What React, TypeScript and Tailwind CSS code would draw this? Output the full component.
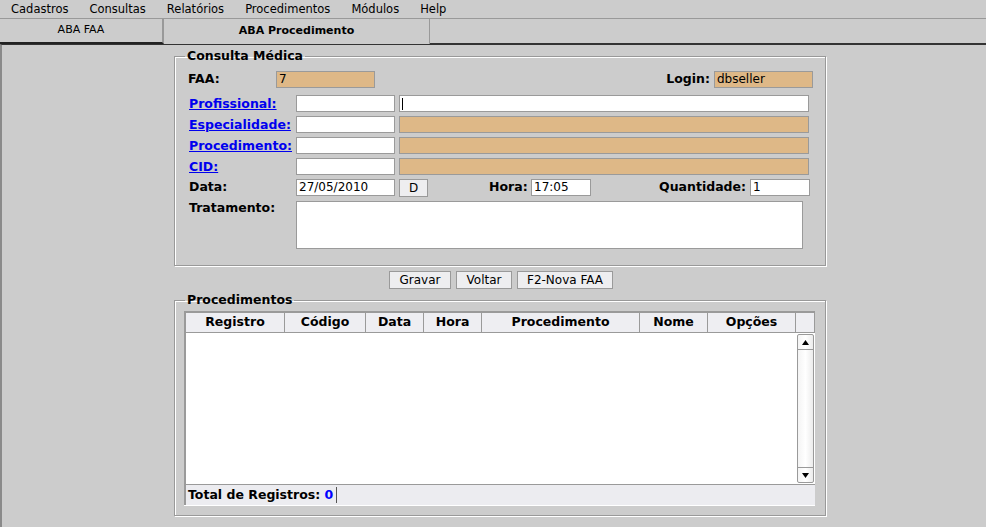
import React from 'react';

const menus = ['Cadastros', 'Consultas', 'Relatórios', 'Procedimentos', 'Módulos', 'Help'];
const columns = [
  { label: 'Registro', w: 'w-[99px]' },
  { label: 'Código', w: 'w-[81px]' },
  { label: 'Data', w: 'w-[58px]' },
  { label: 'Hora', w: 'w-[58px]' },
  { label: 'Procedimento', w: 'w-[158px]' },
  { label: 'Nome', w: 'w-[68px]' },
  { label: 'Opções', w: 'w-[88px]' },
];

const input = 'h-[17px] border border-[#9a9a9a] px-[2px] text-[12px] leading-[15px] text-black';
const white = `${input} bg-white`;
const tan = `${input} bg-[#deb887]`;
const btn = 'h-[18px] border border-[#9a9a9a] bg-[#eeeef0] text-[12px] leading-[16px] text-black';
const label = 'text-[12.5px] font-bold';

const LinkLabel = ({ text }: { text: string }) => (
  <span className="w-[108px] shrink-0 text-[12.5px] font-bold text-[#0000ee] underline leading-[17px] pl-[1px]">{text}</span>
);

const LookupRow = ({ text }: { text: string }) => (
  <div className="flex items-center h-[17px]">
    <LinkLabel text={text} />
    <div className={`${white} w-[99px]`} />
    <div className={`${tan} ml-[4px] w-[410px]`} />
  </div>
);

export default function App() {
  return (
    <div className="w-[986px] h-[527px] overflow-hidden bg-[#cccccc] font-['DejaVu_Sans',sans-serif] text-black flex flex-col">
      {/* Menu */}
      <div className="h-[19px] shrink-0 flex items-center gap-[21px] pl-[11px] border-b border-[#999] text-[11.5px]">
        {menus.map((m) => (
          <span key={m} className="leading-[18px]">{m}</span>
        ))}
      </div>

      {/* Tabs */}
      <div className="h-[25px] shrink-0 flex text-[11px]">
        <div className="w-[164px] flex items-center justify-center border-b-2 border-b-[#222] border-r-2 border-r-[#999]">
          ABA FAA
        </div>
        <div className="w-[266px] flex items-center justify-center font-bold border-r border-[#999]">
          ABA Procedimento
        </div>
        <div className="flex-1 border-b border-[#333]" />
      </div>

      {/* Content */}
      <div className="flex-1 border-t border-[#333] border-l-2 border-l-[#8a8a8a] flex flex-col">
        <fieldset className="mt-[4px] ml-[172px] w-[652px] border border-[#999] shadow-[inset_1px_1px_0_#fff,1px_1px_0_#fff] px-[13px] pb-[16px]">
          <legend className="ml-[-3px] px-[2px] text-[12.5px] font-bold leading-[14px]">Consulta Médica</legend>

          <div className="flex flex-col gap-[4px] pt-[8px]">
            <div className="flex items-center h-[17px]">
              <span className={`w-[88px] shrink-0 ${label}`}>FAA:</span>
              <div className={`${tan} w-[99px]`}>7</div>
              <span className={`flex-1 text-right pr-[4px] ${label}`}>Login:</span>
              <div className={`${tan} w-[99px] mr-[-1px]`}>dbseller</div>
            </div>

            <div className="flex items-center h-[17px] mt-[3px]">
              <LinkLabel text="Profissional:" />
              <div className={`${white} w-[99px]`} />
              <div className={`${white} ml-[4px] w-[410px] flex items-center`}>
                <span className="w-px h-[12px] bg-black" />
              </div>
            </div>
            <LookupRow text="Especialidade:" />
            <LookupRow text="Procedimento:" />
            <LookupRow text="CID:" />

            <div className="flex items-center h-[17px]">
              <span className={`w-[108px] shrink-0 pl-[1px] ${label}`}>Data:</span>
              <div className={`${white} w-[99px]`}>27/05/2010</div>
              <div className={`${btn} ml-[4px] w-[29px] h-[17px] text-center`}>D</div>
              <span className={`ml-[61px] w-[42px] ${label}`}>Hora:</span>
              <div className={`${white} w-[60px]`}>17:05</div>
              <span className={`flex-1 text-right pr-[4px] ${label}`}>Quantidade:</span>
              <div className={`${white} w-[60px] mr-[2px]`}>1</div>
            </div>

            <div className="flex items-start mt-[1px]">
              <span className={`w-[108px] shrink-0 pl-[1px] leading-[14px] ${label}`}>Tratamento:</span>
              <div className="w-[507px] h-[48px] bg-white border border-[#9a9a9a]" />
            </div>
          </div>
        </fieldset>

        <div className="ml-[172px] w-[652px] flex justify-center gap-[5px] mt-[5px] pl-[2px]">
          <button className={`${btn} w-[62px]`}>Gravar</button>
          <button className={`${btn} w-[56px]`}>Voltar</button>
          <button className={`${btn} w-[96px]`}>F2-Nova FAA</button>
        </div>

        <fieldset className="mt-[4px] ml-[172px] w-[652px] border border-[#999] shadow-[inset_1px_1px_0_#fff,1px_1px_0_#fff] pb-[10px]">
          <legend className="ml-[10px] px-[2px] text-[12.5px] font-bold leading-[14px]">Procedimentos</legend>

          <div className="mt-[4px] ml-[9px] w-[631px] border-l-2 border-[#9a9a9a] shadow-[0_1px_0_#fff]">
            {/* header */}
            <div className="flex h-[22px] bg-[#eeeef2] border-t-2 border-[#9a9a9a] border-b border-b-[#9a9a9a] text-[12.5px] font-bold">
              {columns.map((c) => (
                <div key={c.label} className={`${c.w} shrink-0 border-r border-[#9a9a9a] flex items-center justify-center`}>
                  {c.label}
                </div>
              ))}
              <div className="flex-1 border-r border-[#9a9a9a]" />
            </div>

            {/* body */}
            <div className="flex h-[152px] bg-white border-b border-[#9a9a9a]">
              <div className="flex-1" />
              <div className="w-[17px] mr-[1px] my-[1px] border border-[#9a9a9a] rounded-[2px] bg-gradient-to-r from-[#f4f4f4] via-white to-[#ececec] flex flex-col justify-between">
                <div className="h-[15px] border-b border-[#9a9a9a] flex items-center justify-center">
                  <svg width="7" height="5" viewBox="0 0 7 5"><path d="M3.5 0L7 5H0z" fill="#000" /></svg>
                </div>
                <div className="h-[15px] border-t border-[#9a9a9a] flex items-center justify-center">
                  <svg width="7" height="5" viewBox="0 0 7 5"><path d="M0 0h7L3.5 5z" fill="#000" /></svg>
                </div>
              </div>
            </div>

            {/* footer */}
            <div className="flex items-center h-[20px] bg-[#ececf0] text-[12.5px] font-bold pl-[2px]">
              <span>Total de Registros:&nbsp;</span>
              <span className="text-[#0000ff] pr-[3px] border-r border-[#555] leading-[16px]">0</span>
            </div>
          </div>
        </fieldset>
      </div>
    </div>
  );
}
